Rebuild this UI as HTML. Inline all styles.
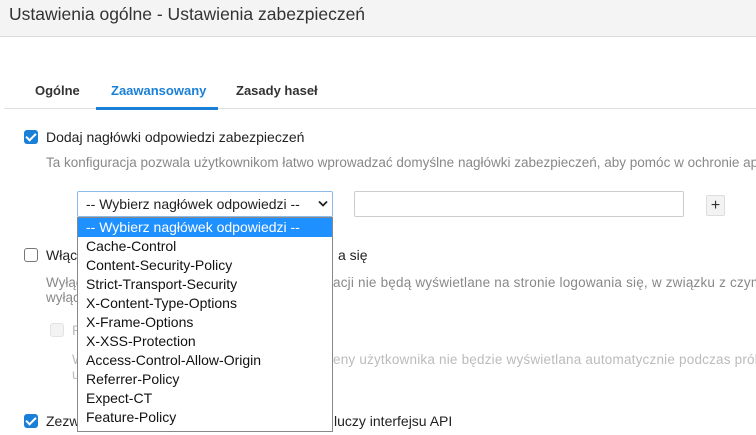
<!DOCTYPE html>
<html><head><meta charset="utf-8"><style>
*{box-sizing:border-box;margin:0;padding:0}
html,body{width:756px;height:435px;overflow:hidden}
body{background:#fff;font-family:"Liberation Sans",sans-serif;position:relative;color:#222}
#w{position:absolute;left:0;top:0;width:756px;height:435px;overflow:hidden}
.a{position:absolute;white-space:nowrap}
.hdr{left:0;top:0;width:756px;height:37px;background:#f4f4f4;border-bottom:1px solid #dcdcdc}
.cb{position:absolute;width:14px;height:14px;border-radius:3px}
.on{background:#1a7fd6}
.on:after{content:"";position:absolute;left:4px;top:1px;width:4px;height:8px;border:solid #fff;border-width:0 2px 2px 0;transform:rotate(45deg)}
.off{border:1.5px solid #777;background:#fff}
.dis{border:1px solid #e2e2e2;background:#f3f3f3}
.g{color:#888;font-size:13.5px}
.lg{color:#bbb;font-size:13.5px}
.opt{height:19px;line-height:19px;padding-left:8px;font-size:14px;color:#111}
</style></head><body><div id="w">
<div class="a hdr"></div>
<div class="a" style="left:9px;top:4px;font-size:17.5px;color:#333">Ustawienia ogólne - Ustawienia zabezpieczeń</div>
<div class="a" style="left:4px;top:108px;width:752px;height:1px;background:#e0e0e0"></div>
<div class="a" style="left:96px;top:107px;width:122px;height:3px;background:#1a7fd6"></div>
<div class="a" style="left:35px;top:83px;font-size:13px;font-weight:bold;color:#333">Ogólne</div>
<div class="a" style="left:111px;top:83px;font-size:13px;font-weight:bold;color:#1a7fd6">Zaawansowany</div>
<div class="a" style="left:236px;top:83px;font-size:13px;font-weight:bold;color:#333">Zasady haseł</div>

<div class="cb on" style="left:24px;top:130px"></div>
<div class="a" style="left:46px;top:129px;font-size:14px">Dodaj nagłówki odpowiedzi zabezpieczeń</div>
<div class="a g" style="left:46px;top:155px">Ta konfiguracja pozwala użytkownikom łatwo wprowadzać domyślne nagłówki zabezpieczeń, aby pomóc w ochronie ap</div>

<div class="a" style="left:77px;top:191px;width:256px;height:26px;border:1px solid #8cbbe8;border-radius:2px;font-size:14px;line-height:24px;padding-left:8px">-- Wybierz nagłówek odpowiedzi --</div>
<svg class="a" style="left:318px;top:200px" width="10" height="8"><path d="M1 1.5 L5 5.5 L9 1.5" stroke="#222" stroke-width="1.8" fill="none"/></svg>
<div class="a" style="left:354px;top:191px;width:330px;height:26px;border:1px solid #ccc;border-radius:2px"></div>
<div class="a" style="left:706px;top:195px;width:19px;height:21px;border:1px solid #ddd;background:#f3f3f3;border-radius:2px;text-align:center;font-size:16px;line-height:19px;color:#333">+</div>

<div class="cb off" style="left:24px;top:248px"></div>
<div class="a" style="left:46px;top:247px;font-size:14px">Włącz wyświetlanie</div>
<div class="a" style="left:338px;top:247px;font-size:14px">a się</div>
<div class="a g" style="left:46px;top:275px;line-height:15px">Wyłączenie<br>wyłączenie</div>
<div class="a g" style="left:333px;top:275px;letter-spacing:0.2px">acji nie będą wyświetlane na stronie logowania się, w związku z czym h</div>
<div class="cb dis" style="left:50px;top:323px"></div>
<div class="a lg" style="left:72px;top:322px;font-size:14px">Pokaż</div>
<div class="a lg" style="left:72px;top:352px;line-height:15px">Wyłączenie<br>u</div>
<div class="a lg" style="left:333px;top:352px;letter-spacing:0.2px">eny użytkownika nie będzie wyświetlana automatycznie podczas próby</div>
<div class="cb on" style="left:24px;top:414px"></div>
<div class="a" style="left:46px;top:413px;font-size:14px">Zezwól na uwierzytelnianie</div>
<div class="a" style="left:334px;top:413px;font-size:14px">luczy interfejsu API</div>

<div class="a" style="left:77px;top:217px;width:256px;height:215px;background:#fff;border:1px solid #888">
<div class="opt" style="background:#1e90ff;color:#fff">-- Wybierz nagłówek odpowiedzi --</div>
<div class="opt">Cache-Control</div>
<div class="opt">Content-Security-Policy</div>
<div class="opt">Strict-Transport-Security</div>
<div class="opt">X-Content-Type-Options</div>
<div class="opt">X-Frame-Options</div>
<div class="opt">X-XSS-Protection</div>
<div class="opt">Access-Control-Allow-Origin</div>
<div class="opt">Referrer-Policy</div>
<div class="opt">Expect-CT</div>
<div class="opt">Feature-Policy</div>
</div>
</div></body></html>
